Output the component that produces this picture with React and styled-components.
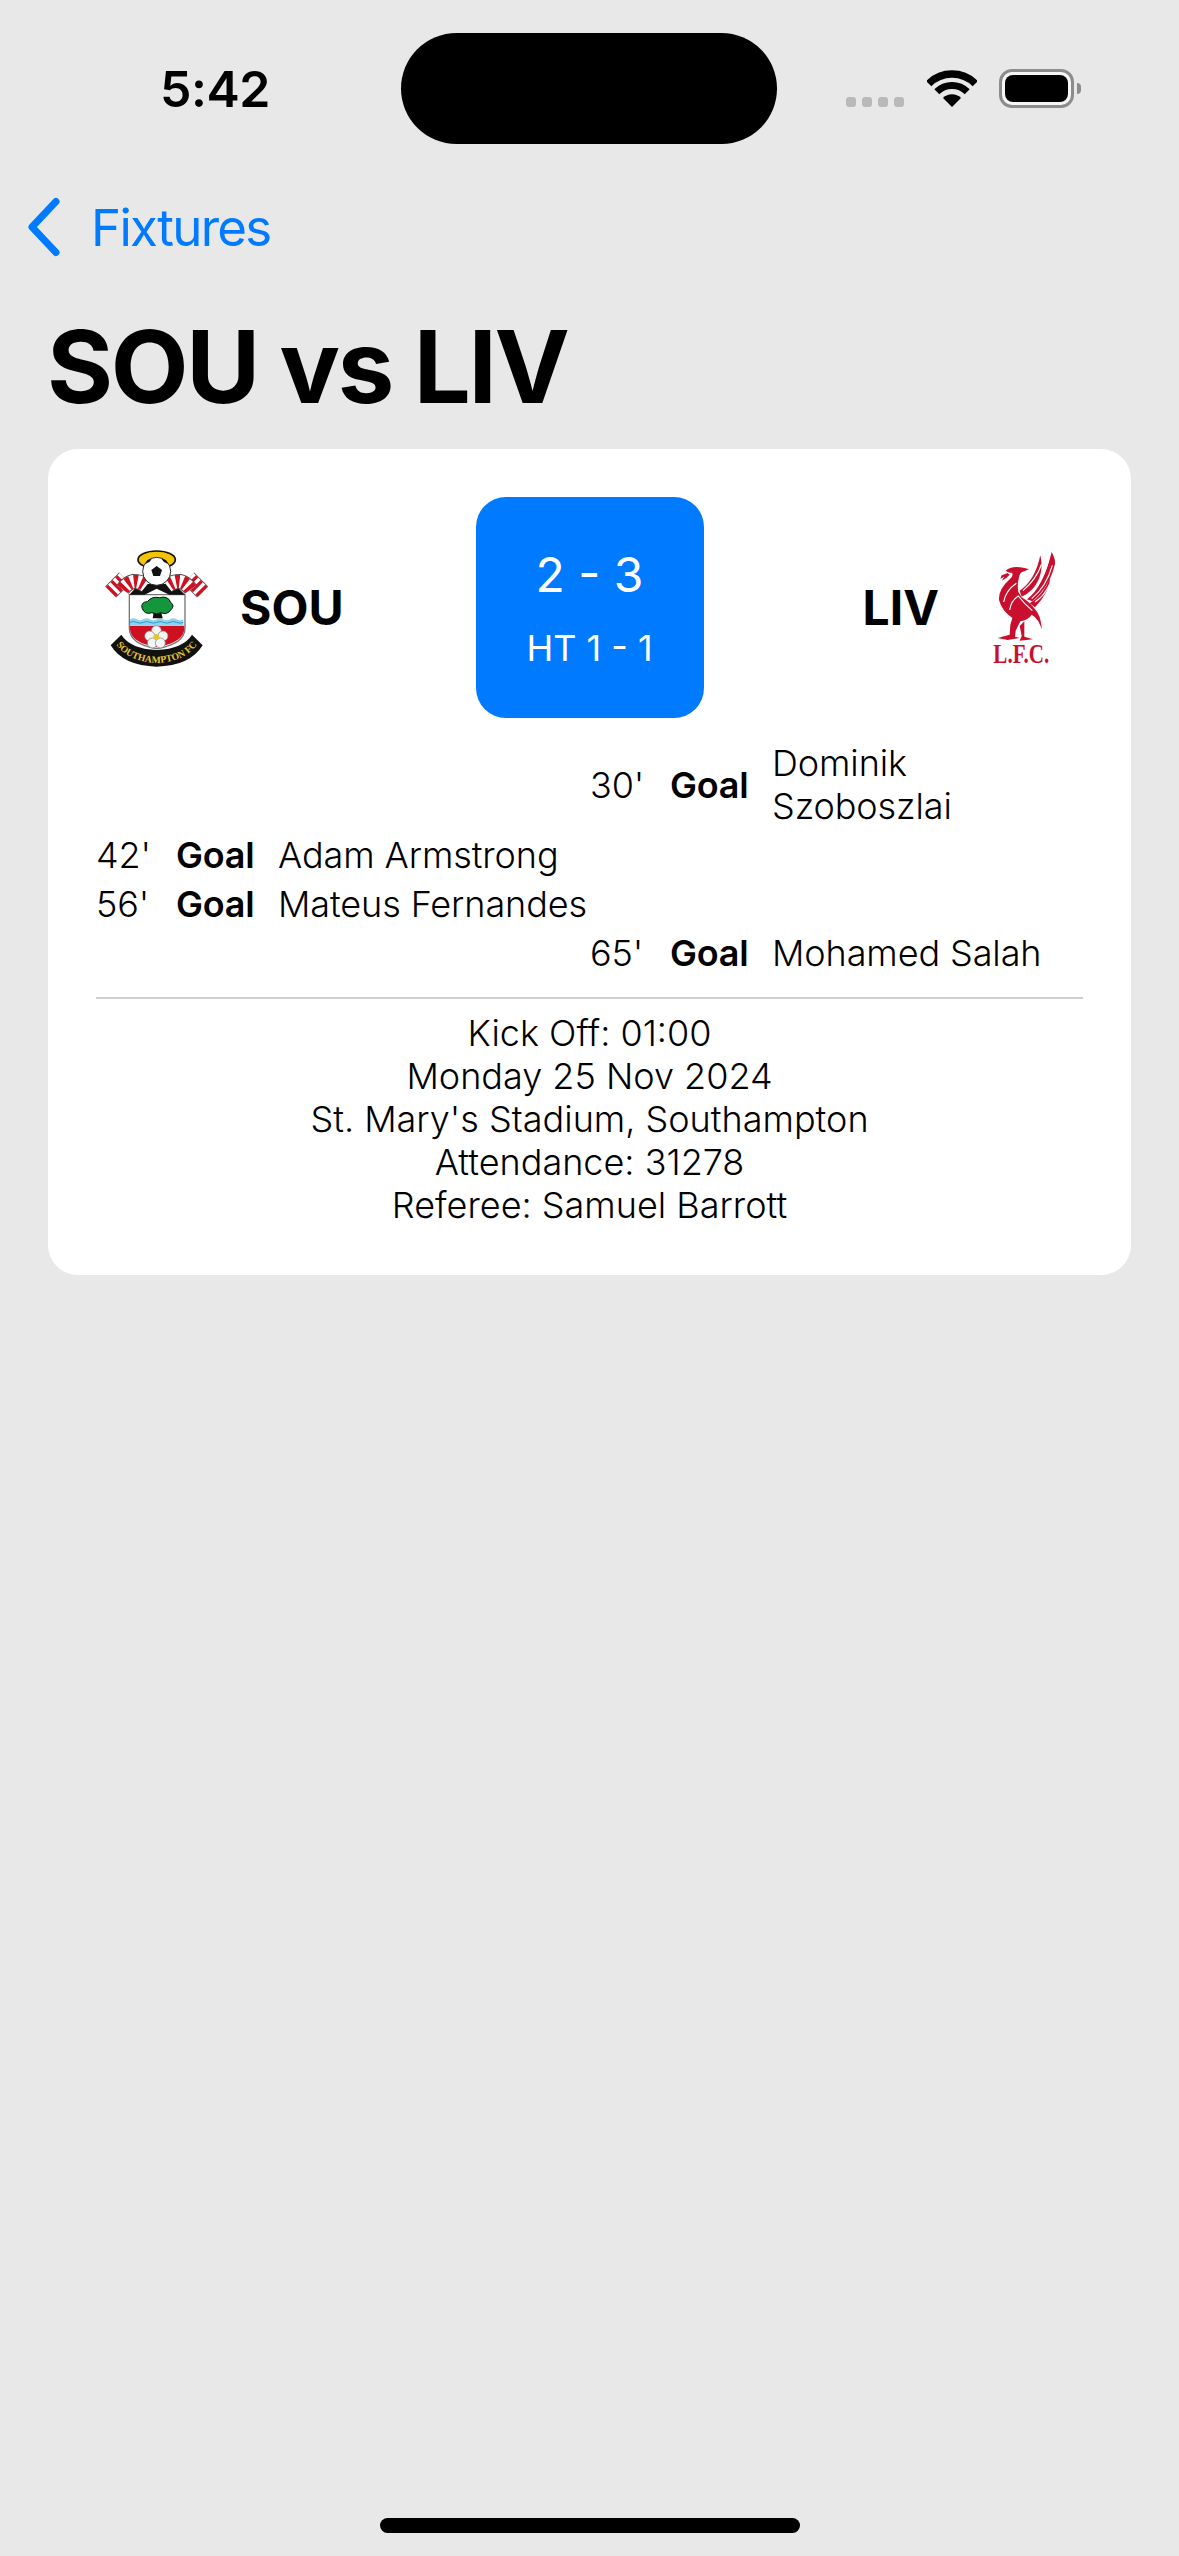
import React from 'react';
import styled, { createGlobalStyle } from 'styled-components';

const GlobalStyle = createGlobalStyle`
  html, body {
    margin: 0;
    padding: 0;
    background: #e8e8e8;
  }
`;

const Screen = styled.div`
  width: 1179px;
  height: 2556px;
  display: flex;
  flex-direction: column;
  background: #e8e8e8;
  color: #000;
  font-family: Inter, "Liberation Sans", sans-serif;
  overflow: hidden;
`;

const StatusBar = styled.div`
  display: flex;
  align-items: center;
  padding: 33px 0 0 160px;
`;

const Clock = styled.div`
  width: 241px;
  font-size: 50px;
  line-height: 60px;
  font-weight: 600;
  letter-spacing: -0.5px;
`;

const Island = styled.div`
  width: 376px;
  height: 111px;
  border-radius: 56px;
  background: #000;
`;

const StatusIcons = styled.div`
  display: flex;
  align-items: center;
  margin-left: 69px;
`;

const SignalDots = styled.div`
  display: flex;
  gap: 6px;
  align-self: flex-end;
  margin-right: 23px;
  margin-bottom: 1px;
`;

const SignalDot = styled.span`
  width: 10px;
  height: 10px;
  border-radius: 3px;
  background: #b9b9b9;
`;

const Battery = styled.div`
  position: relative;
  width: 75px;
  height: 39px;
  margin-left: 22px;
  padding: 3px;
  box-sizing: border-box;
  border: 3px solid #8c8c8c;
  border-radius: 13px;
  background: #f6f6f6;

  &::after {
    content: '';
    position: absolute;
    right: -10px;
    top: 11px;
    width: 4px;
    height: 11px;
    border-radius: 0 6px 6px 0;
    background: #8c8c8c;
  }
`;

const BatteryFill = styled.div`
  height: 100%;
  border-radius: 8px;
  background: #000;
`;

const BackRow = styled.div`
  display: flex;
  align-items: center;
  gap: 31px;
  margin-top: 52px;
  padding-left: 28px;
  height: 62px;
  color: #007aff;
  font-size: 51px;
  font-weight: 400;
  letter-spacing: -1.7px;
`;

const Title = styled.h1`
  margin: 47px 0 0 47px;
  font-size: 101px;
  line-height: 122px;
  font-weight: 700;
  letter-spacing: -2.3px;
`;

const Card = styled.div`
  margin: 22px 48px 0;
  padding: 48px;
  border-radius: 30px;
  background: #fff;
`;

const MatchHeader = styled.div`
  display: flex;
  align-items: center;
  justify-content: space-between;
`;

const Team = styled.div`
  display: flex;
  align-items: center;
  gap: 24px;
  width: 340px;
  justify-content: ${(p) => (p.$away ? 'flex-end' : 'flex-start')};
  font-size: 48px;
  font-weight: 700;
`;

const ScoreBox = styled.div`
  width: 228px;
  height: 221px;
  display: flex;
  flex-direction: column;
  align-items: center;
  justify-content: center;
  gap: 22px;
  border-radius: 30px;
  background: #007aff;
  color: #fff;
`;

const Score = styled.div`
  font-size: 48px;
  line-height: 58px;
  font-weight: 400;
`;

const HalfTime = styled.div`
  font-size: 36px;
  line-height: 44px;
  font-weight: 400;
`;

const Events = styled.div`
  display: flex;
  flex-direction: column;
  gap: 6px;
  margin-top: 24px;
`;

const EventRow = styled.div`
  display: grid;
  grid-template-columns: 56px 78px 1fr;
  column-gap: 24px;
  align-items: center;
  width: 493px;
  margin-left: ${(p) => (p.$away ? 'auto' : '0')};
  font-size: 36px;
  line-height: 43px;
  font-weight: 300;
  letter-spacing: -0.1px;
  white-space: nowrap;
`;

const EventType = styled.span`
  font-weight: 600;
  letter-spacing: -0.2px;
`;

const Divider = styled.div`
  height: 2px;
  margin: 22px 0 13px;
  background: #cfcfcf;
`;

const Details = styled.div`
  text-align: center;
  font-size: 36px;
  line-height: 43px;
  font-weight: 300;
`;

const HomeBar = styled.div`
  width: 420px;
  height: 15px;
  margin: auto auto 23px;
  border-radius: 8px;
  background: #000;
`;

const BackChevron = () => (
  <svg width="32" height="60" viewBox="0 0 32 60" fill="none">
    <path d="M28 4.5 L4 30 L28 55.5" stroke="#007aff" strokeWidth="7" strokeLinecap="round" strokeLinejoin="round" />
  </svg>
);

const WifiIcon = () => (
  <svg width="50" height="37" viewBox="0 0 50 37" fill="none">
    <path d="M1.7 13.7A33 33 0 0 1 48.3 13.7" stroke="#000" strokeWidth="7.5" />
    <path d="M9.8 21.8A21.5 21.5 0 0 1 40.2 21.8" stroke="#000" strokeWidth="7" />
    <path d="M25 37L16 28A12.7 12.7 0 0 1 34 28Z" fill="#000" />
  </svg>
);

const Scarf = ({ d, width, dash }) => (
  <g fill="none">
    <path d={d} stroke="#444" strokeWidth={width + 5} />
    <path d={d} stroke="#fff" strokeWidth={width} />
    <path d={d} stroke="#cf1020" strokeWidth={width} strokeDasharray={dash} />
  </g>
);

const SaintsCrest = () => (
  <svg width="120" height="120" viewBox="48 82 360 360">
    <ellipse cx="230" cy="117" rx="56" ry="26" fill="#f2c500" stroke="#111" strokeWidth="5" />
    <path d="M148 222H315V322Q315 370 230 384Q148 370 148 322Z" fill="#fff" stroke="#777" strokeWidth="4" />
    <path d="M150 315H313V326Q310 366 230 380Q152 366 150 326Z" fill="#cf1020" />
    <path d="M150 296q10 -6 20 0t20 0t20 0t20 0t20 0t20 0t20 0t20 0V315H150Z" fill="#8fd3ee" />
    <path d="M150 305q10 -5 20 0t20 0t20 0t20 0t20 0t20 0t20 0t20 0" fill="none" stroke="#2a9bd4" strokeWidth="3" />
    <path d="M224 258L218 293H248L240 258Z" fill="#111" />
    <path d="M186 262Q182 244 202 243Q215 226 238 231Q264 224 272 245Q286 256 272 268Q262 284 242 276Q230 284 216 276Q194 284 186 262Z" fill="#14963c" stroke="#111" strokeWidth="3" />
    <g fill="#f4f4f4" stroke="#777" strokeWidth="2">
      <circle cx="229" cy="330" r="15" />
      <circle cx="209" cy="346" r="15" />
      <circle cx="249" cy="346" r="15" />
      <circle cx="217" cy="367" r="15" />
      <circle cx="241" cy="367" r="15" />
    </g>
    <circle cx="229" cy="349" r="9" fill="#e6c62c" />
    <path d="M148 222L178 190H282L315 222H268L230 204L194 222Z" fill="#111" />
    <Scarf d="M92 214L134 172" width={42} dash="10 10" />
    <Scarf d="M128 206Q158 164 198 196" width={40} dash="11 10" />
    <Scarf d="M368 214L326 172" width={42} dash="10 10" />
    <Scarf d="M332 206Q302 164 262 196" width={40} dash="11 10" />
    <circle cx="230" cy="152" r="42" fill="#fff" stroke="#222" strokeWidth="3" />
    <path d="M230 136L246 148L240 166H220L214 148Z" fill="#111" />
    <path d="M196 130L208 124L216 114L202 118ZM264 130L252 124L244 114L258 118Z" fill="#111" />
    <path d="M92 374L124 342Q150 384 230 388Q310 384 336 342L368 374Q330 436 230 438Q130 436 92 374Z" fill="#111" />
    <path id="saintsBanner" d="M112 376Q150 424 230 427Q310 424 348 376" fill="none" />
    <text fontFamily="'Liberation Serif', serif" fontSize="29" fontWeight="700" fill="#e6c62c">
      <textPath href="#saintsBanner" startOffset="50%" textAnchor="middle">SOUTHAMPTON FC</textPath>
    </text>
  </svg>
);

const LiverBird = () => (
  <svg width="120" height="120" viewBox="6 52 360 360">
    <g fill="#c8102e">
      <path d="M134 120Q150 106 178 110Q192 112 204 116L190 122Q176 124 174 140Q168 162 172 184L182 200Q206 214 222 236Q238 250 243 296L232 272Q224 258 212 252Q202 268 178 272L164 300L162 318L176 322L140 328L110 322L146 312L148 282L154 262Q122 240 114 208Q112 176 146 146Q160 132 152 126Q142 128 134 120Z" />
      <path d="M176 286L190 272L190 318L216 326L176 330L182 316Z" />
      <path d="M140 127L122 134L118 144L130 138L122 150L136 142L146 132Z" />
      <path d="M176 180Q222 150 238 74Q252 132 214 176Q198 192 182 198Z" />
      <path d="M198 206Q246 170 272 64Q284 86 282 100Q266 168 214 212Z" />
      <path d="M206 218Q246 196 268 140Q266 184 222 230Z" />
    </g>
    <g fill="none" stroke="#fff" strokeWidth="3.5">
      <path d="M186 180Q226 146 242 100" />
      <path d="M200 194Q244 158 262 92" />
      <path d="M212 204Q256 168 274 104" />
      <path d="M222 214Q250 196 266 160" />
      <path d="M128 214Q134 180 166 158" />
      <path d="M146 238Q150 210 172 196Q190 220 214 240" />
    </g>
    <text x="97" y="398" fontFamily="'Liberation Serif', serif" fontSize="80" fill="#c8102e" textLength="168" lengthAdjust="spacingAndGlyphs">L.F.C.</text>
  </svg>
);

const App = () => (
  <Screen>
    <GlobalStyle />
    <StatusBar>
      <Clock>5:42</Clock>
      <Island />
      <StatusIcons>
        <SignalDots>
          <SignalDot />
          <SignalDot />
          <SignalDot />
          <SignalDot />
        </SignalDots>
        <WifiIcon />
        <Battery>
          <BatteryFill />
        </Battery>
      </StatusIcons>
    </StatusBar>
    <BackRow>
      <BackChevron />
      <span>Fixtures</span>
    </BackRow>
    <Title>SOU vs LIV</Title>
    <Card>
      <MatchHeader>
        <Team>
          <SaintsCrest />
          <span>SOU</span>
        </Team>
        <ScoreBox>
          <Score>2 - 3</Score>
          <HalfTime>HT 1 - 1</HalfTime>
        </ScoreBox>
        <Team $away>
          <span>LIV</span>
          <LiverBird />
        </Team>
      </MatchHeader>
      <Events>
        <EventRow $away>
          <span>30'</span>
          <EventType>Goal</EventType>
          <span>Dominik<br />Szoboszlai</span>
        </EventRow>
        <EventRow>
          <span>42'</span>
          <EventType>Goal</EventType>
          <span>Adam Armstrong</span>
        </EventRow>
        <EventRow>
          <span>56'</span>
          <EventType>Goal</EventType>
          <span>Mateus Fernandes</span>
        </EventRow>
        <EventRow $away>
          <span>65'</span>
          <EventType>Goal</EventType>
          <span>Mohamed Salah</span>
        </EventRow>
      </Events>
      <Divider />
      <Details>
        <div>Kick Off: 01:00</div>
        <div>Monday 25 Nov 2024</div>
        <div>St. Mary's Stadium, Southampton</div>
        <div>Attendance: 31278</div>
        <div>Referee: Samuel Barrott</div>
      </Details>
    </Card>
    <HomeBar />
  </Screen>
);

export default App;
